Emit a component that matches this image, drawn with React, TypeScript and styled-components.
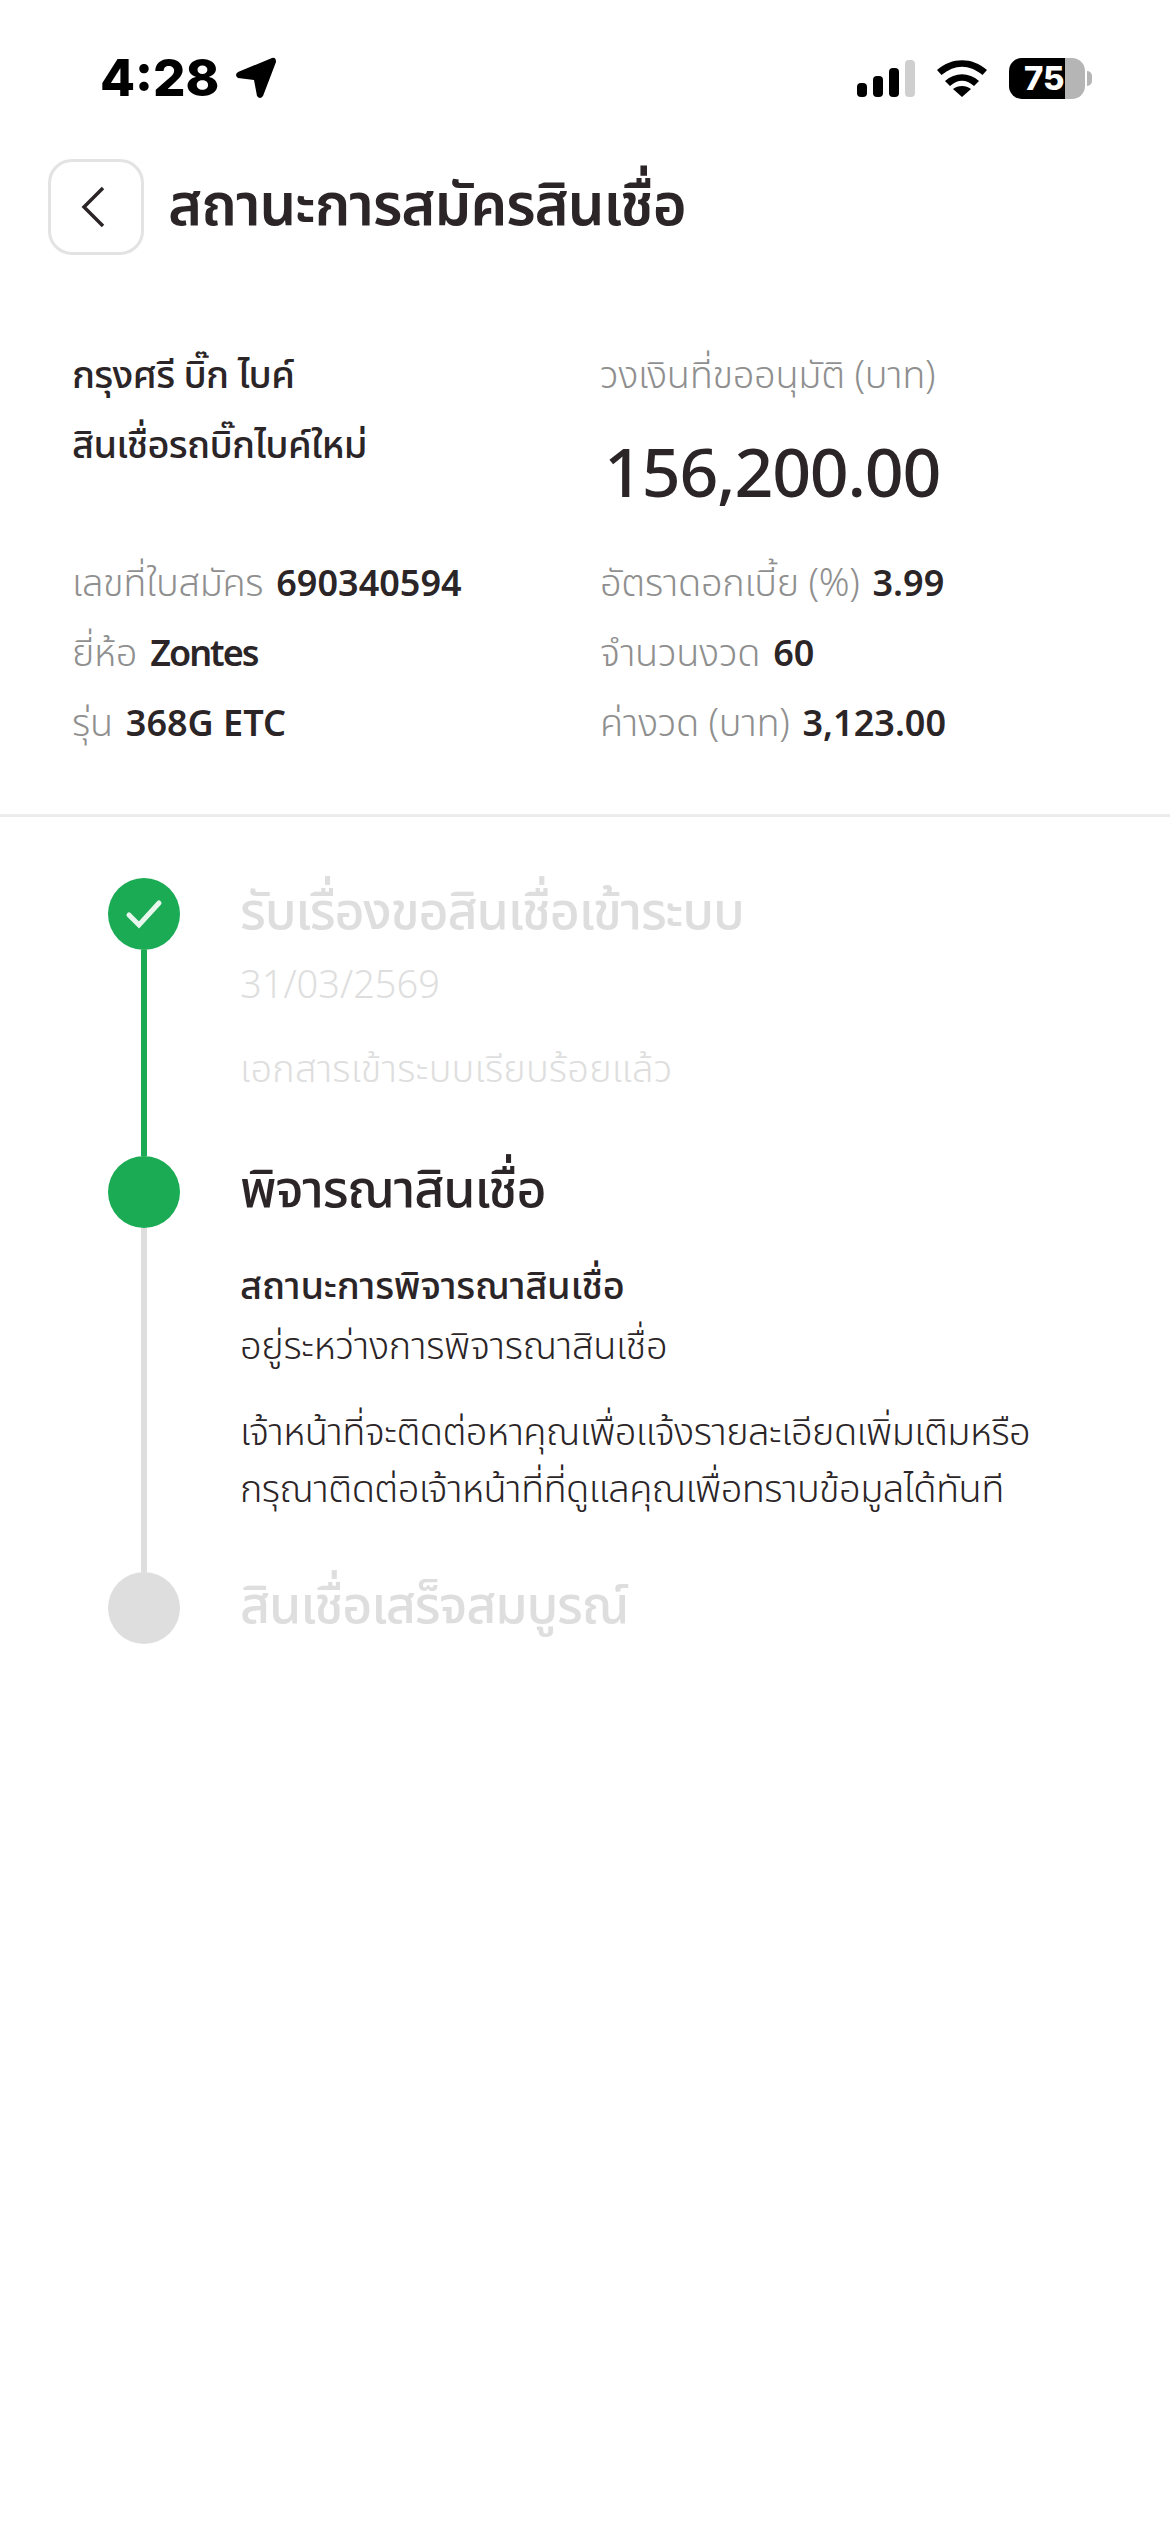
import React from "react";
import styled, { createGlobalStyle } from "styled-components";

const Global = createGlobalStyle`
  html, body { margin: 0; padding: 0; background: #fff; }
  body { font-family: "Noto Sans", "Noto Sans Thai", "Liberation Sans", "DejaVu Sans", sans-serif; color: #2b2527; }
`;
const Page = styled.div`
  width: 1170px;
  height: 2532px;
  background: #fff;
  overflow: hidden;
  display: flex;
  flex-direction: column;
`;
const StatusBar = styled.div`
  height: 158px;
  padding: 50px 85px 0 100px;
  box-sizing: border-box;
  display: flex;
  justify-content: space-between;
  align-items: flex-start;
  flex: none;
`;
const TimeWrap = styled.div`
  display: flex;
  align-items: center;
  gap: 16px;
  height: 56px;
`;
const Time = styled.span`
  font-family: Inter, "Liberation Sans", sans-serif;
  font-weight: 800;
  font-size: 51px;
  line-height: 56px;
  color: #000;
`;
const StatusIcons = styled.div`
  display: flex;
  align-items: center;
  gap: 22px;
  height: 56px;
`;
const Battery = styled.div`
  position: relative;
  width: 76px;
  height: 41px;
  border-radius: 13px;
  background: linear-gradient(90deg, #000 0 56px, #b5b5b5 56px);
  font-family: Inter, "Liberation Sans", sans-serif;
  font-weight: 800;
  font-size: 33px;
  line-height: 41px;
  color: #fff;
  padding-left: 15px;
  box-sizing: border-box;
  &::after {
    content: "";
    position: absolute;
    right: -7px;
    top: 13px;
    width: 5px;
    height: 15px;
    border-radius: 0 8px 8px 0;
    background: #b5b5b5;
  }
`;
const Header = styled.div`
  display: flex;
  align-items: center;
  gap: 24px;
  padding-left: 48px;
  height: 98px;
  flex: none;
`;
const BackButton = styled.button`
  width: 96px;
  height: 96px;
  box-sizing: border-box;
  border: 3px solid #e3e3e3;
  border-radius: 24px;
  background: #fff;
  padding: 0 6px 0 0;
  display: flex;
  align-items: center;
  justify-content: center;
`;
const Title = styled.h1`
  margin: 0 0 8px;
  font-size: 58px;
  line-height: 90px;
  font-weight: 600;
  letter-spacing: -1px;
  color: #2b2527;
`;
const Info = styled.div`
  display: grid;
  grid-template-columns: 528px 1fr;
  padding: 84px 0 58px 72px;
  border-bottom: 3px solid #ececec;
  flex: none;
`;
const Column = styled.div`
  display: flex;
  flex-direction: column;
`;
const ProductLine = styled.div`
  font-size: 38px;
  line-height: 66px;
  height: 70px;
  font-weight: 500;
  letter-spacing: -0.7px;
`;
const FieldLabelTop = styled.div`
  font-size: 38px;
  line-height: 66px;
  height: 70px;
  font-weight: 300;
  letter-spacing: -0.3px;
  color: #8f8f8f;
`;
const Amount = styled.div`
  font-size: 68px;
  line-height: 84px;
  height: 84px;
  margin-top: 19px;
  font-weight: 500;
  padding-left: 4px;
  letter-spacing: -1.2px;
  color: #2b2527;
`;
const Spacer = styled.div<{ $h: number }>`
  height: ${(p) => p.$h}px;
`;
const Row = styled.div`
  display: flex;
  align-items: baseline;
  gap: 13px;
  height: 70px;
  line-height: 70px;
`;
const RowLabel = styled.span`
  font-size: 38px;
  font-weight: 300;
  letter-spacing: -0.3px;
  color: #8f8f8f;
`;
const RowValue = styled.span<{ $tight?: boolean }>`
  font-size: 36px;
  font-weight: 600;
  letter-spacing: ${(p) => (p.$tight ? "-2px" : "0")};
  color: #2b2527;
`;
const Timeline = styled.div`
  padding: 61px 0 0 108px;
  display: flex;
  flex-direction: column;
`;
const Step = styled.div<{ $h: number }>`
  display: flex;
  gap: 60px;
  height: ${(p) => p.$h}px;
`;
const Rail = styled.div`
  width: 72px;
  display: flex;
  flex-direction: column;
  align-items: center;
  flex: none;
`;
const Dot = styled.div<{ $on: boolean }>`
  width: 72px;
  height: 72px;
  border-radius: 50%;
  background: ${(p) => (p.$on ? "#1bab55" : "#dedede")};
  display: flex;
  align-items: center;
  justify-content: center;
  flex: none;
`;
const Line = styled.div<{ $on: boolean }>`
  width: 6px;
  flex: 1;
  background: ${(p) => (p.$on ? "#1bab55" : "#dedede")};
`;
const Body = styled.div`
  display: flex;
  flex-direction: column;
`;
const StepTitle = styled.div<{ $on: boolean }>`
  font-size: 52px;
  line-height: 62px;
  margin-bottom: 10px;
  font-weight: 500;
  letter-spacing: -1.2px;
  color: ${(p) => (p.$on ? "#2b2527" : "#dedede")};
`;
const DateText = styled.div`
  font-size: 38px;
  line-height: 50px;
  margin-top: 8px;
  font-weight: 300;
  color: #dedede;
`;
const Note = styled.div`
  font-size: 38px;
  line-height: 50px;
  margin-top: 34px;
  font-weight: 300;
  letter-spacing: 0.2px;
  color: #dedede;
`;
const Sub = styled.div`
  font-size: 38px;
  line-height: 60px;
  margin-top: 26px;
  font-weight: 500;
  letter-spacing: -0.2px;
  color: #2b2527;
`;
const Text = styled.div`
  font-size: 38px;
  line-height: 60px;
  font-weight: 300;
  letter-spacing: -0.3px;
  color: #2b2527;
`;
const Para = styled(Text)`
  margin-top: 28px;
  line-height: 57px;
  letter-spacing: -0.55px;
  white-space: nowrap;
`;

export default function App() {
  return (
    <Page>
      <Global />
      <StatusBar>
        <TimeWrap>
          <Time>4:28</Time>
          <svg width="42" height="42" viewBox="0 0 42 42">
            <path d="M37 1 L3 15 Q-1 18 3 21 L19 23 L22 39 Q25 43 28 39 L41 5 Q41 0 37 1Z" fill="#000" />
          </svg>
        </TimeWrap>
        <StatusIcons>
          <svg width="58" height="37" viewBox="0 0 58 37">
            <rect x="0" y="23" width="10" height="14" rx="4" fill="#000" />
            <rect x="16" y="16" width="10" height="21" rx="4" fill="#000" />
            <rect x="32" y="8" width="10" height="29" rx="4" fill="#000" />
            <rect x="48" y="0" width="10" height="37" rx="4" fill="#cfcfcf" />
          </svg>
          <svg width="50" height="37" viewBox="0 0 50 37">
            <path d="M25 37 L16 29 C21 25 29 25 34 29Z M8 21 C18 12 32 12 42 21 L37 26 C29 19 21 19 13 26Z M0 10 C15 -3 35 -3 50 10 L45.5 15 C32 4 18 4 4.5 15Z" fill="#000" />
          </svg>
          <Battery>75</Battery>
        </StatusIcons>
      </StatusBar>
      <Header>
        <BackButton aria-label="back">
          <svg width="24" height="42" viewBox="0 0 24 42">
            <path d="M22 2 L3 21 L22 40" fill="none" stroke="#2b2527" strokeWidth="3.5" />
          </svg>
        </BackButton>
        <Title>สถานะการสมัครสินเชื่อ</Title>
      </Header>
      <Info>
        <Column>
          <ProductLine>กรุงศรี บิ๊ก ไบค์</ProductLine>
          <ProductLine>สินเชื่อรถบิ๊กไบค์ใหม่</ProductLine>
          <Spacer $h={66} />
          <Row><RowLabel>เลขที่ใบสมัคร</RowLabel><RowValue>690340594</RowValue></Row>
          <Row><RowLabel>ยี่ห้อ</RowLabel><RowValue $tight>Zontes</RowValue></Row>
          <Row><RowLabel>รุ่น</RowLabel><RowValue>368G ETC</RowValue></Row>
        </Column>
        <Column>
          <FieldLabelTop>วงเงินที่ขออนุมัติ (บาท)</FieldLabelTop>
          <Amount>156,200.00</Amount>
          <Spacer $h={33} />
          <Row><RowLabel>อัตราดอกเบี้ย (%)</RowLabel><RowValue>3.99</RowValue></Row>
          <Row><RowLabel>จำนวนงวด</RowLabel><RowValue>60</RowValue></Row>
          <Row><RowLabel>ค่างวด (บาท)</RowLabel><RowValue>3,123.00</RowValue></Row>
        </Column>
      </Info>
      <Timeline>
        <Step $h={278}>
          <Rail>
            <Dot $on>
              <svg width="38" height="30" viewBox="0 0 38 30">
                <path d="M4 16 L14 26 L34 4" fill="none" stroke="#e8f7ee" strokeWidth="5" strokeLinecap="round" />
              </svg>
            </Dot>
            <Line $on />
          </Rail>
          <Body>
            <StepTitle $on={false}>รับเรื่องขอสินเชื่อเข้าระบบ</StepTitle>
            <DateText>31/03/2569</DateText>
            <Note>เอกสารเข้าระบบเรียบร้อยแล้ว</Note>
          </Body>
        </Step>
        <Step $h={416}>
          <Rail>
            <Dot $on />
            <Line $on={false} />
          </Rail>
          <Body>
            <StepTitle $on>พิจารณาสินเชื่อ</StepTitle>
            <Sub>สถานะการพิจารณาสินเชื่อ</Sub>
            <Text>อยู่ระหว่างการพิจารณาสินเชื่อ</Text>
            <Para>เจ้าหน้าที่จะติดต่อหาคุณเพื่อแจ้งรายละเอียดเพิ่มเติมหรือ<br />กรุณาติดต่อเจ้าหน้าที่ที่ดูแลคุณเพื่อทราบข้อมูลได้ทันที</Para>
          </Body>
        </Step>
        <Step $h={72}>
          <Rail>
            <Dot $on={false} />
          </Rail>
          <Body>
            <StepTitle $on={false}>สินเชื่อเสร็จสมบูรณ์</StepTitle>
          </Body>
        </Step>
      </Timeline>
    </Page>
  );
}
